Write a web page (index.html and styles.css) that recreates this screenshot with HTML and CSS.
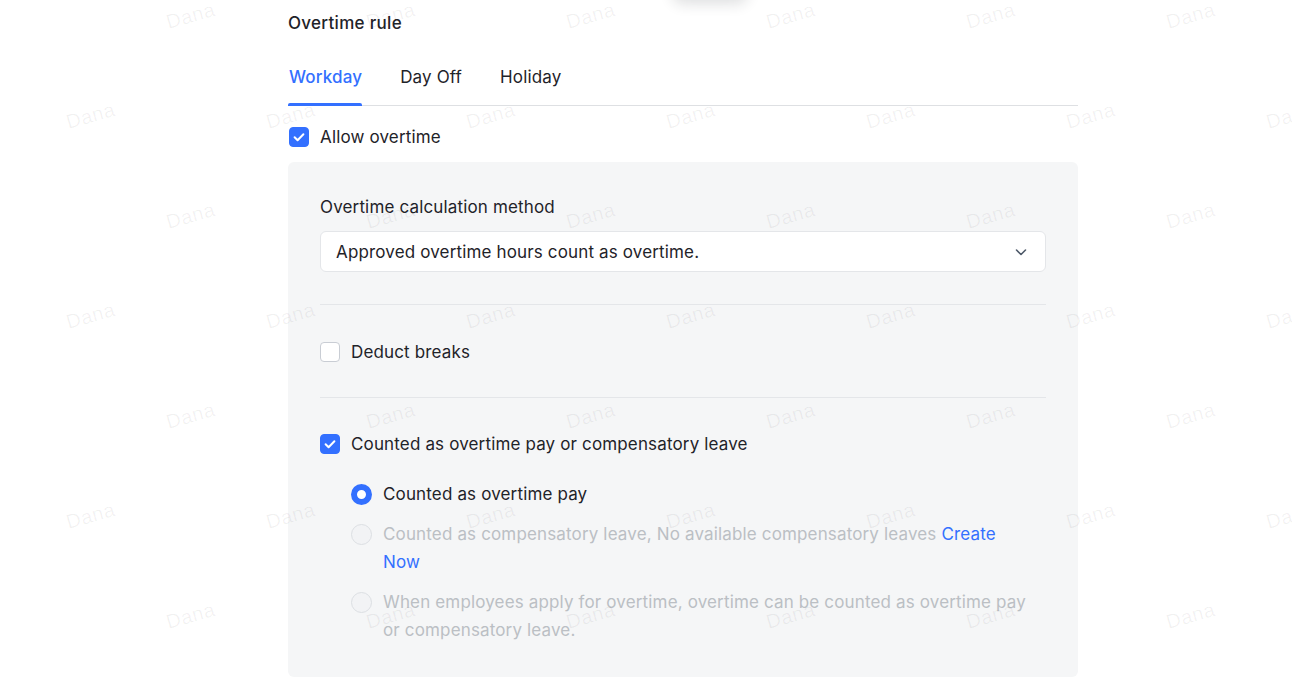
FILE: index.html
```html
<!DOCTYPE html>
<html lang="en">
<head>
<meta charset="utf-8">
<title>Overtime rule</title>
<link rel="stylesheet" href="styles.css">
</head>
<body>
<div class="top-shadow"></div>
<main class="page">
  <h2 class="title">Overtime rule</h2>
  <div class="tabs">
    <div class="tab active">Workday</div>
    <div class="tab">Day Off</div>
    <div class="tab">Holiday</div>
  </div>
  <label class="check-row first">
    <span class="cb checked"><svg viewBox="0 0 20 20" width="20" height="20"><path d="M5.6 10.2l3 3 5.8-6" fill="none" stroke="#fff" stroke-width="2" stroke-linecap="round" stroke-linejoin="round"/></svg></span>
    <span class="label">Allow overtime</span>
  </label>
  <section class="panel">
    <div class="field-label">Overtime calculation method</div>
    <div class="select">
      <span>Approved overtime hours count as overtime.</span>
      <svg class="chev" viewBox="0 0 14 14" width="14" height="14"><path d="M2.5 5l4.5 4.5L11.5 5" fill="none" stroke="#4e5969" stroke-width="1.6" stroke-linecap="round" stroke-linejoin="round"/></svg>
    </div>
    <div class="divider"></div>
    <label class="check-row">
      <span class="cb"></span>
      <span class="label">Deduct breaks</span>
    </label>
    <div class="divider second"></div>
    <label class="check-row">
      <span class="cb checked"><svg viewBox="0 0 20 20" width="20" height="20"><path d="M5.6 10.2l3 3 5.8-6" fill="none" stroke="#fff" stroke-width="2" stroke-linecap="round" stroke-linejoin="round"/></svg></span>
      <span class="label">Counted as overtime pay or compensatory leave</span>
    </label>
    <div class="radios">
      <div class="radio-row">
        <span class="radio on"></span>
        <span class="rtext">Counted as overtime pay</span>
      </div>
      <div class="radio-row disabled">
        <span class="radio"></span>
        <span class="rtext">Counted as compensatory leave, No available compensatory leaves <a class="link">Create Now</a></span>
      </div>
      <div class="radio-row disabled">
        <span class="radio"></span>
        <span class="rtext">When employees apply for overtime, overtime can be counted as overtime pay or compensatory leave.</span>
      </div>
    </div>
  </section>
</main>
<div class="watermarks" aria-hidden="true">
  <div class="wm-row even"><span>Dana</span><span>Dana</span><span>Dana</span><span>Dana</span><span>Dana</span><span>Dana</span></div>
  <div class="wm-row odd"><span>Dana</span><span>Dana</span><span>Dana</span><span>Dana</span><span>Dana</span><span>Dana</span><span>Dana</span></div>
  <div class="wm-row even"><span>Dana</span><span>Dana</span><span>Dana</span><span>Dana</span><span>Dana</span><span>Dana</span></div>
  <div class="wm-row odd"><span>Dana</span><span>Dana</span><span>Dana</span><span>Dana</span><span>Dana</span><span>Dana</span><span>Dana</span></div>
  <div class="wm-row even"><span>Dana</span><span>Dana</span><span>Dana</span><span>Dana</span><span>Dana</span><span>Dana</span></div>
  <div class="wm-row odd"><span>Dana</span><span>Dana</span><span>Dana</span><span>Dana</span><span>Dana</span><span>Dana</span><span>Dana</span></div>
  <div class="wm-row even"><span>Dana</span><span>Dana</span><span>Dana</span><span>Dana</span><span>Dana</span><span>Dana</span></div>
</div>
</body>
</html>
```

FILE: styles.css
```css
* { box-sizing: border-box; }
html, body { margin: 0; padding: 0; }
body {
  background: #fff;
  font-family: Inter, "Noto Sans", "Liberation Sans", sans-serif;
  font-size: 17px;
  letter-spacing: 0.15px;
  color: #1f2329;
  width: 1292px;
  height: 698px;
  overflow: hidden;
  position: relative;
}
.top-shadow {
  position: absolute;
  left: 672px;
  top: -22px;
  width: 76px;
  height: 22px;
  border-radius: 12px;
  box-shadow: 0 4px 14px rgba(31, 35, 41, 0.14);
  background: #fff;
}
.page {
  margin-left: 288px;
  width: 790px;
  padding-top: 11px;
}
.title {
  margin: 0;
  font-size: 17px;
  font-weight: 500;
  line-height: 24px;
  letter-spacing: 0.3px;
}
.tabs {
  display: flex;
  gap: 37px;
  margin-top: 30px;
  border-bottom: 1px solid #dee0e3;
}
.tab {
  position: relative;
  line-height: 24px;
  padding-bottom: 16px;
  color: #1f2329;
  padding-left: 1px;
}
.tab.active { color: #3370ff; font-weight: 500; }
.tab.active::after {
  content: "";
  position: absolute;
  left: 0;
  right: 0;
  bottom: -1px;
  height: 3px;
  border-radius: 2px 2px 0 0;
  background: #3370ff;
}
.check-row {
  display: flex;
  align-items: center;
  gap: 11px;
  line-height: 24px;
}
.check-row.first { margin-top: 19px; padding-left: 1px; }
.cb {
  width: 20px;
  height: 20px;
  border-radius: 4px;
  border: 1px solid #c9cdd4;
  background: #fff;
  flex: none;
  display: flex;
}
.cb.checked { background: #3370ff; border-color: #3370ff; }
.cb.checked svg { margin: -1px; }
.panel {
  margin-top: 13px;
  background: #f5f6f7;
  border-radius: 6px;
  padding: 33px 32px 33px 32px;
}
.field-label { line-height: 24px; }
.select {
  margin-top: 12px;
  height: 41px;
  background: #fff;
  border: 1px solid #e4e6e9;
  border-radius: 6px;
  display: flex;
  align-items: center;
  justify-content: space-between;
  padding: 0 17px 0 15px;
}
.chev { margin-top: 1px; }
.divider {
  height: 1px;
  background: #e4e6e9;
  margin: 32px 0 35px;
}
.divider.second { margin-top: 33px; margin-bottom: 34px; }
.radios {
  margin-top: 24px;
  padding-left: 31px;
  padding-right: 12px;
  display: flex;
  flex-direction: column;
  gap: 12px;
}
.radio-row {
  display: flex;
  align-items: flex-start;
  gap: 11px;
  line-height: 28px;
}
.radio {
  flex: none;
  width: 21px;
  height: 21px;
  margin-top: 4px;
  border-radius: 50%;
  background: #f2f3f5;
  border: 1px solid #dcdfe3;
}
.radio.on {
  background: #fff;
  border: 6.5px solid #3370ff;
}
.radio-row.disabled .rtext { color: #bbbfc4; }
.link { color: #3370ff; }
.watermarks {
  position: absolute;
  inset: 0;
  overflow: hidden;
  pointer-events: none;
}
.wm-row {
  display: flex;
  height: 100px;
}
.wm-row:first-child { margin-top: 2px; }
.wm-row.even { padding-left: 101px; }
.wm-row.odd { padding-left: 1px; }
.wm-row span {
  flex: none;
  width: 200px;
  text-align: center;
  font-family: "Liberation Sans", Arial, sans-serif;
  font-size: 20px;
  letter-spacing: 0.5px;
  line-height: 24px;
  color: rgba(31, 35, 41, 0.06);
  transform: rotate(-16deg);
}
```
